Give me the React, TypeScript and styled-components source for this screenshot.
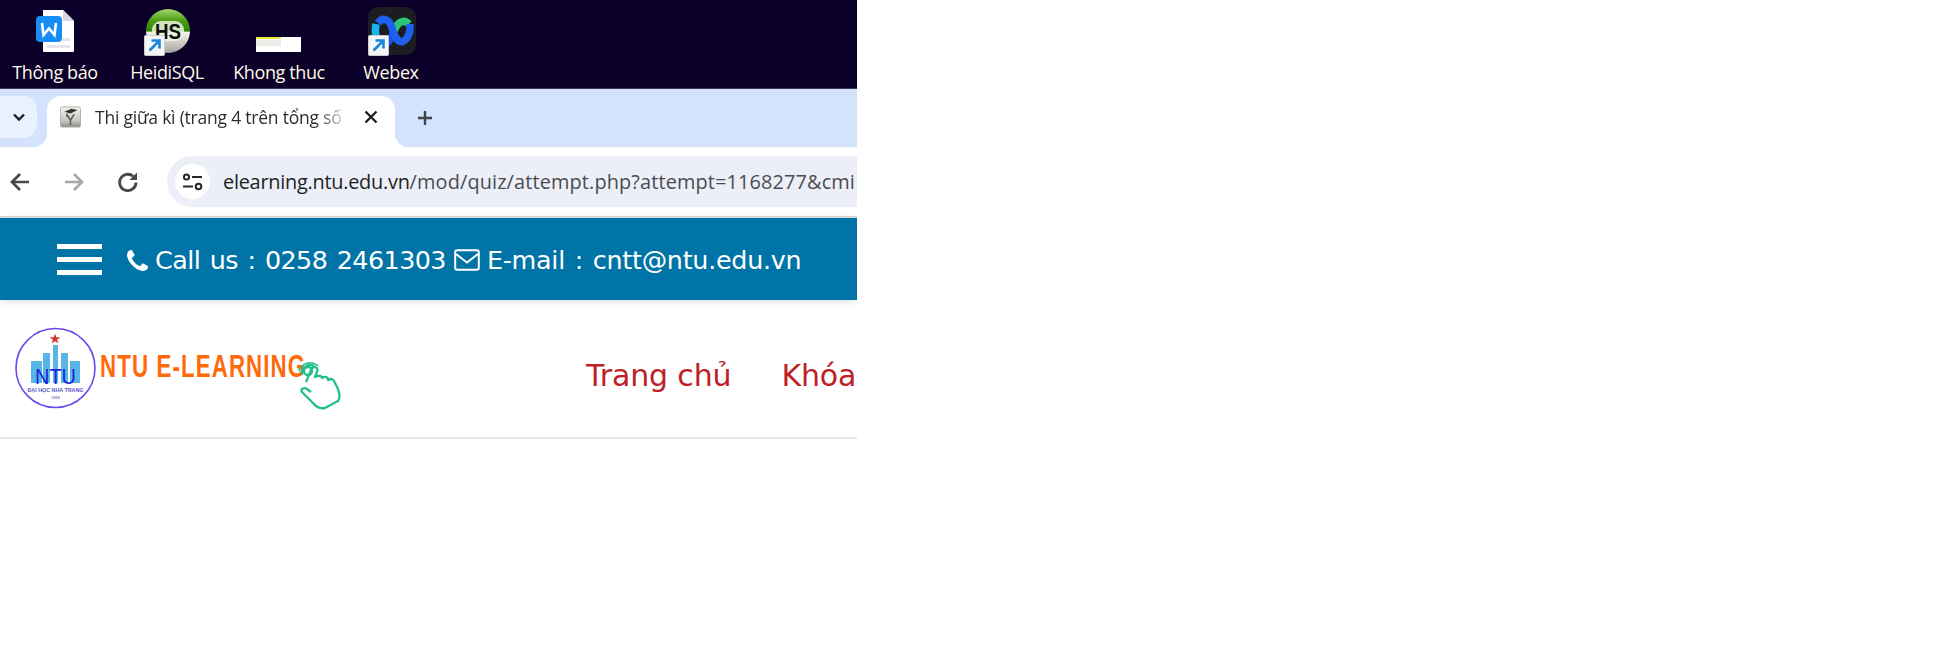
import React from "react";
import styled, { createGlobalStyle } from "styled-components";

const Global = createGlobalStyle`
  html, body { margin: 0; padding: 0; background: #fff; }
  #root { width: 1943px; height: 652px; overflow: hidden; background: #fff; }
`;

const Shot = styled.div`
  width: 857px;
  overflow: hidden;
  display: flex;
  flex-direction: column;
`;

const Desktop = styled.div`
  height: 88px;
  background: #0b0029;
  display: grid;
  grid-template-columns: repeat(4, 112px);
  margin-left: -1px;
`;

const DesktopItem = styled.div`
  display: flex;
  flex-direction: column;
  align-items: center;
  position: relative;
`;

const IconSlot = styled.div`
  width: 56px;
  height: 58px;
  margin-top: 4px;
  position: relative;
`;

const DesktopLabel = styled.span`
  font: 18px/20px "Open Sans", "Noto Sans", sans-serif;
  color: #fffbe8;
  letter-spacing: -0.4px;
  white-space: nowrap;
`;

const Badge = styled.svg`
  position: absolute;
  left: 5px;
  top: 31px;
`;

const Divider = styled.div`
  height: 1px;
  background: #3a3550;
`;

const TabStrip = styled.div`
  height: 58px;
  background: #d3e3fd;
  display: flex;
  align-items: flex-end;
  position: relative;
`;

const TabSearch = styled.div`
  width: 37px;
  height: 42px;
  margin: 0 10px 9px 0;
  padding-left: 1px;
  box-sizing: border-box;
  border-radius: 0 14px 14px 0;
  background: #e9f1fe;
  display: flex;
  align-items: center;
  justify-content: center;
  flex: none;
`;

const Tab = styled.div`
  width: 348px;
  height: 51px;
  background: #fff;
  border-radius: 14px 14px 0 0;
  display: flex;
  align-items: center;
  padding: 0 16px 9px 13px;
  box-sizing: border-box;
  position: relative;
  flex: none;
  &::before, &::after {
    content: "";
    position: absolute;
    bottom: 0;
    width: 14px;
    height: 14px;
  }
  &::before { left: -14px; background: radial-gradient(circle at 0 0, transparent 14px, #fff 14.5px); }
  &::after { right: -14px; background: radial-gradient(circle at 100% 0, transparent 14px, #fff 14.5px); }
`;

const TabTitle = styled.span`
  font: 17.5px/24px "Open Sans", "Noto Sans", sans-serif;
  letter-spacing: -0.22px;
  color: #2a2c30;
  margin-left: 14px;
  width: 250px;
  white-space: nowrap;
  overflow: hidden;
  flex: none;
  -webkit-mask-image: linear-gradient(90deg, #000 88%, rgba(0, 0, 0, 0.15) 100%);
  mask-image: linear-gradient(90deg, #000 88%, rgba(0, 0, 0, 0.15) 100%);
`;

const TabClose = styled.div`
  margin-left: 18px;
  display: flex;
`;

const NewTab = styled.div`
  margin: 0 0 20px 21px;
  display: flex;
`;

const Toolbar = styled.div`
  height: 69px;
  background: #fff;
  display: flex;
  align-items: center;
  flex: none;
`;

const NavIcons = styled.div`
  display: grid;
  grid-template-columns: repeat(3, 54px);
  justify-items: center;
  width: 174px;
  margin-left: -7px;
  flex: none;
`;

const Omnibox = styled.div`
  flex: 1;
  height: 51px;
  background: #eceff8;
  border-radius: 26px 0 0 26px;
  display: flex;
  align-items: center;
  padding-left: 8px;
  min-width: 0;
  overflow: hidden;
`;

const SiteChip = styled.div`
  width: 35px;
  height: 35px;
  border-radius: 50%;
  background: #fff;
  display: flex;
  align-items: center;
  justify-content: center;
  flex: none;
`;

const Url = styled.div`
  font: 19.9px/26px "Open Sans", "Noto Sans", sans-serif;
  margin-left: 13px;
  white-space: nowrap;
  color: #4a4c50;
  letter-spacing: 0.13px;
`;

const Host = styled.span`
  color: #1d1f23;
  letter-spacing: -0.25px;
`;

const GreyRule = styled.div`
  height: 2px;
  background: #dcdcdc;
`;

const BlueBar = styled.header`
  height: 82px;
  background: #0074a6;
  display: flex;
  align-items: center;
  padding: 0 0 0 57px;
  box-shadow: 0 2px 8px rgba(0, 0, 0, 0.12);
  position: relative;
  color: #fff;
  font: 25.4px/34px "DejaVu Sans", Verdana, sans-serif;
  white-space: nowrap;
`;

const Burger = styled.div`
  width: 45px;
  height: 31px;
  display: flex;
  flex-direction: column;
  justify-content: space-between;
  margin-right: 25px;
  span { height: 5px; background: #fff; display: block; }
`;

const Contact = styled.span<{ $track: number }>`
  display: inline-flex;
  align-items: center;
  letter-spacing: ${(p) => p.$track}px;
  word-spacing: 2px;
  padding-top: 2px;
`;

const ContactIcon = styled.span`
  display: inline-flex;
  margin-right: 7px;
`;

const MailGap = styled.span`
  width: 8px;
`;

const NavBar = styled.nav`
  height: 137px;
  background: #fff;
  border-bottom: 2px solid #e6e6e6;
  display: flex;
  align-items: flex-start;
  white-space: nowrap;
`;

const Logo = styled.svg`
  margin: 25px 0 0 13px;
  flex: none;
`;

const MenuLink = styled.a<{ $gap: number }>`
  font: 30px/40px "DejaVu Sans", Verdana, sans-serif;
  letter-spacing: -0.15px;
  color: #be2026;
  margin-top: 56px;
  margin-left: ${(p) => p.$gap}px;
  flex: none;
`;

const Shortcut = () => (
  <Badge width="21" height="21" viewBox="0 0 21 21">
    <rect x="0.5" y="0.5" width="20" height="20" rx="1" fill="#f3f5f7" stroke="#c8ccd0" />
    <path d="M5.500 15.500 L14.500 6.500 M7.500 5.500 H15.500 V13.500" fill="none" stroke="#1c86dc" strokeWidth="2.600" />
  </Badge>
);

const App = () => (
  <>
    <Global />
    <Shot>
      <Desktop>
        <DesktopItem>
          <IconSlot>
            <svg width="56" height="58" viewBox="0 0 56 58">
              <path d="M16 6 H36 L47 17 V47 a1 1 0 0 1 -1 1 H17 a1 1 0 0 1 -1 -1 Z" fill="#fff" />
              <path d="M36 6 L47 17 H36 Z" fill="#d6d9e0" />
              <rect x="9" y="12" width="26" height="26" rx="4" fill="#1a8cf5" />
              <path d="M15 19 L16.500 31 L22 24.500 L27.500 31 L29 19" fill="none" stroke="#fff" strokeWidth="2.600" />
              <rect x="35" y="34" width="8" height="3" fill="#e3e6ec" />
              <rect x="20" y="41" width="23" height="3" fill="#e3e6ec" />
            </svg>
          </IconSlot>
          <DesktopLabel>Thông báo</DesktopLabel>
        </DesktopItem>
        <DesktopItem>
          <IconSlot>
            <svg width="56" height="58" viewBox="0 0 56 58">
              <defs>
                <linearGradient id="hs" x1="0" x2="0" y1="0" y2="1">
                  <stop offset="0" stopColor="#a6d86a" />
                  <stop offset="0.25" stopColor="#4f9e18" />
                  <stop offset="0.5" stopColor="#2f8206" />
                  <stop offset="0.53" stopColor="#f4f4ee" />
                  <stop offset="1" stopColor="#a4a49a" />
                </linearGradient>
              </defs>
              <circle cx="29" cy="27" r="22" fill="url(#hs)" />
              <rect x="13" y="17" width="32" height="20" rx="9" fill="#eaf3dc" opacity="0.85" />
              <text x="29" y="34.500" textAnchor="middle" fontFamily="Liberation Sans, sans-serif" fontWeight="700" fontSize="22" fill="#0c0c0c" textLength="26" lengthAdjust="spacingAndGlyphs">HS</text>
            </svg>
            <Shortcut />
          </IconSlot>
          <DesktopLabel>HeidiSQL</DesktopLabel>
        </DesktopItem>
        <DesktopItem>
          <IconSlot>
            <svg width="56" height="58" viewBox="0 0 56 58">
              <rect x="5" y="33" width="45" height="15" fill="#fff" />
              <rect x="5" y="33" width="25" height="2" fill="#f0e840" />
              <rect x="5" y="36" width="25" height="6" fill="#ebebe8" />
            </svg>
          </IconSlot>
          <DesktopLabel>Khong thuc</DesktopLabel>
        </DesktopItem>
        <DesktopItem>
          <IconSlot>
            <svg width="56" height="58" viewBox="0 0 56 58">
              <rect x="5" y="3" width="48" height="48" rx="10" fill="#1b1d22" />
              <g fill="none" strokeWidth="7.500">
                <path d="M13 20 C11 30 14 38 18 40" stroke="#16b4ec" />
                <path d="M18 40 C26 42 29 32 31 27" stroke="#1d50e0" />
                <path d="M31 27 C34 19 40 14 46 20" stroke="#2bc67a" />
                <path d="M15 19 C20 12 27 16 29 24 C32 36 38 42 44 34 C48 28 47 23 47 20" stroke="#2060f0" />
              </g>
            </svg>
            <Shortcut />
          </IconSlot>
          <DesktopLabel>Webex</DesktopLabel>
        </DesktopItem>
      </Desktop>
      <Divider />
      <TabStrip>
        <TabSearch>
          <svg width="16" height="16" viewBox="0 0 16 16">
            <path d="M3 5.500 L8 10.500 L13 5.500" fill="none" stroke="#1f2124" strokeWidth="2.400" />
          </svg>
        </TabSearch>
        <Tab>
          <svg width="24" height="24" viewBox="0 0 24 24">
            <defs>
              <linearGradient id="fav" x1="0" x2="0" y1="0" y2="1">
                <stop offset="0" stopColor="#f2f2f0" />
                <stop offset="0.7" stopColor="#c4c4c0" />
                <stop offset="1" stopColor="#8c8c88" />
              </linearGradient>
            </defs>
            <rect x="0.5" y="0.5" width="23" height="23" rx="2" fill="url(#fav)" stroke="#a8a8a4" />
            <path d="M5 6 L13 2.500 L20 4 L12 8 Z" fill="#34342f" />
            <path d="M8 8 L8 12 M8 9 L12 16 L16 9 M12 16 V21" fill="none" stroke="#5f5f5a" strokeWidth="1.800" />
          </svg>
          <TabTitle>Thi giữa kì (trang 4 trên tổng số</TabTitle>
          <TabClose>
            <svg width="16" height="16" viewBox="0 0 16 16">
              <path d="M2.500 2.500 L13.500 13.500 M13.500 2.500 L2.500 13.500" stroke="#1c1e21" strokeWidth="2.400" />
            </svg>
          </TabClose>
        </Tab>
        <NewTab>
          <svg width="18" height="18" viewBox="0 0 18 18">
            <path d="M9 2 V16 M2 9 H16" stroke="#3f4246" strokeWidth="2.400" />
          </svg>
        </NewTab>
      </TabStrip>
      <Toolbar>
        <NavIcons>
          <svg width="22" height="22" viewBox="0 0 22 22">
            <path d="M20 11 H3 M11 3 L3 11 L11 19" fill="none" stroke="#46484c" strokeWidth="2.700" />
          </svg>
          <svg width="22" height="22" viewBox="0 0 22 22">
            <path d="M2 11 H19 M11 3 L19 11 L11 19" fill="none" stroke="#a6a8ab" strokeWidth="2.700" />
          </svg>
          <svg width="22" height="22" viewBox="0 0 22 22">
            <path d="M19 11.500 A8.200 8.200 0 1 1 16.200 5.300" fill="none" stroke="#46484c" strokeWidth="2.800" />
            <path d="M20 1.500 V9 H12.500 Z" fill="#46484c" />
          </svg>
        </NavIcons>
        <Omnibox>
          <SiteChip>
            <svg width="22" height="18" viewBox="0 0 22 18">
              <circle cx="4.500" cy="4" r="2.600" fill="none" stroke="#26282c" strokeWidth="2" />
              <path d="M10 4 H20 M1 13.500 H11" stroke="#26282c" strokeWidth="2.200" />
              <circle cx="16.500" cy="13.500" r="2.800" fill="none" stroke="#26282c" strokeWidth="2" />
            </svg>
          </SiteChip>
          <Url>
            <Host>elearning.ntu.edu.vn</Host>/mod/quiz/attempt.php?attempt=1168277&amp;cmi
          </Url>
        </Omnibox>
      </Toolbar>
      <GreyRule />
      <BlueBar>
        <Burger>
          <span />
          <span />
          <span />
        </Burger>
        <Contact $track={-0.56}>
          <ContactIcon>
            <svg width="21" height="21" viewBox="0 0 1408 1408">
              <path d="M1408 1112q0 27-10 70.5t-21 68.500q-21 50-122 106-94 51-186 51-27 0-53-3.500t-57.500-12.500-47-14.500-55.500-20.500-49-18q-98-35-175-83-127-79-264-216t-216-264q-48-77-83-175-3-9-18-49t-20.500-55.500-14.500-47-12.500-57.500-3.500-53q0-92 51-186 56-101 106-122 25-11 68.500-21t70.500-10q14 0 21 3 18 6 53 76 11 19 30 54t35 63.500 31 53.500q3 4 17.500 25t21.500 35.500 7 28.500q0 20-28.500 50t-62 55-62 53-28.500 46q0 9 5 22.500t8.500 20.500 14 24 11.500 19q76 137 174 235t235 174q2 1 19 11.500t24 14 20.500 8.500 22.500 5q18 0 46-28.500t53-62 55-62 50-28.500q14 0 28.500 7t35.500 21.500 25 17.500q25 15 53.500 31t63.500 35 54 30q70 35 76 53 3 7 3 21z" fill="#fff" />
            </svg>
          </ContactIcon>
          Call us : 0258 2461303
        </Contact>
        <MailGap />
        <Contact $track={-0.27}>
          <ContactIcon>
            <svg width="26" height="22" viewBox="0 0 26 22">
              <rect x="1.200" y="1.200" width="23.600" height="19.600" rx="2" fill="none" stroke="#fff" strokeWidth="2" />
              <path d="M2 5 L13 13.500 L24 5" fill="none" stroke="#fff" strokeWidth="2" />
            </svg>
          </ContactIcon>
          E-mail : cntt@ntu.edu.vn
        </Contact>
      </BlueBar>
      <NavBar>
        <Logo width="330" height="90" viewBox="0 0 330 90">
          <circle cx="42.500" cy="43" r="39.500" fill="#fff" stroke="#6a48ee" strokeWidth="1.600" />
          <path d="M42 8.500 L43.300 12.300 H47.300 L44.100 14.700 L45.300 18.500 L42 16.200 L38.700 18.500 L39.900 14.700 L36.700 12.300 H40.700 Z" fill="#d9342b" />
          <rect x="18" y="36" width="11" height="22" fill="#58b6e6" />
          <rect x="30" y="28" width="7" height="30" fill="#58b6e6" />
          <rect x="40" y="20" width="5" height="38" fill="#58b6e6" />
          <rect x="48" y="28" width="7" height="30" fill="#58b6e6" />
          <rect x="57" y="36" width="10" height="22" fill="#58b6e6" />
          <text x="42.500" y="59" textAnchor="middle" fontFamily="Liberation Sans, sans-serif" fontSize="22" fill="#1c24dc" textLength="41" lengthAdjust="spacingAndGlyphs">NTU</text>
          <text x="42.500" y="67" textAnchor="middle" fontFamily="Liberation Sans, sans-serif" fontSize="5.500" fontWeight="700" fill="#5a58c8" textLength="56" lengthAdjust="spacingAndGlyphs">ĐẠI HỌC NHA TRANG</text>
          <text x="42.500" y="73.500" textAnchor="middle" fontFamily="Liberation Sans, sans-serif" fontSize="4" fontWeight="700" fill="#8a88b8">1959</text>
          <g transform="translate(87 52) scale(0.72 1)">
            <text x="0" y="0" fontFamily="Liberation Sans, sans-serif" fontWeight="700" fontSize="31" fill="#ff6a0a" textLength="285" lengthAdjust="spacing">NTU E-LEARNING</text>
          </g>
          <g fill="none" stroke="#21bf8c" strokeWidth="2.300" strokeLinejoin="round">
            <path transform="translate(9 1)" d="M284 56 L289 44 C291 39 297 41 295 46 L293 51 C297 49 300 50 300 52 C303 50 306 51 306 54 C309 52 312 53 313 57 C317 64 319 71 316 75 L303 82 C298 83 294 81 291 77 L280 66 C278 63 282 61 285 63 L289 66" />
            <circle cx="295" cy="46" r="4" />
            <path d="M289 50 A8 8 0 0 1 302 42" strokeWidth="2" />
            <path d="M286 46 A11.500 11.500 0 0 1 305 41" strokeWidth="1.600" />
          </g>
        </Logo>
        <MenuLink $gap={243}>Trang chủ</MenuLink>
        <MenuLink $gap={50}>Khóa</MenuLink>
      </NavBar>
    </Shot>
  </>
);

export default App;
